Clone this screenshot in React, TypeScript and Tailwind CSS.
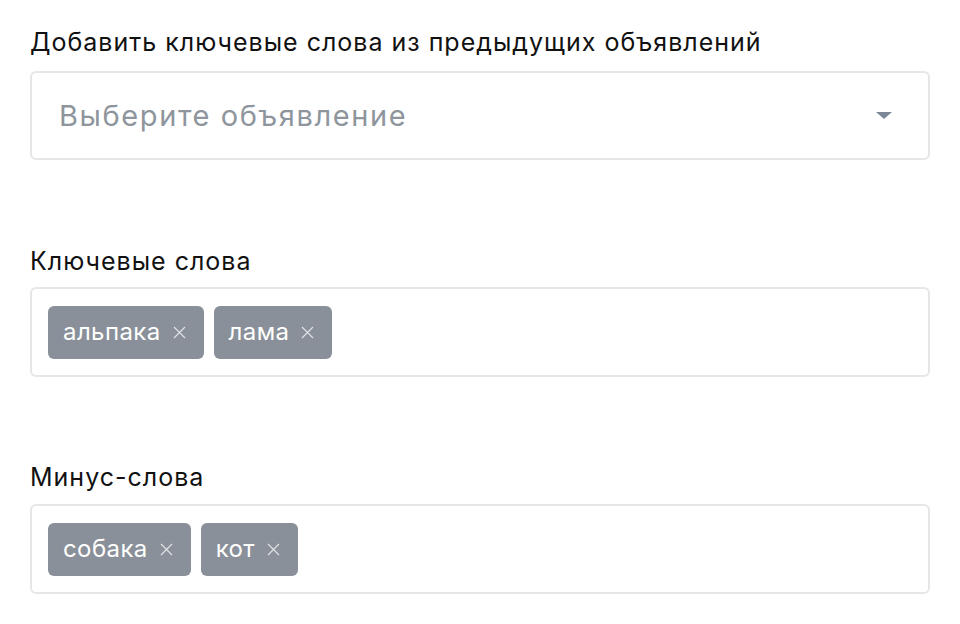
import React from "react";

function Chip({ label }: { label: string }) {
  return (
    <div className="flex h-[53px] items-center rounded-[6px] bg-[#8a9099] pl-[15px] pr-[18px] text-[24px] tracking-[0.4px] text-white">
      <span>{label}</span>
      <svg className="ml-[12px]" width="13" height="13" viewBox="0 0 13 13" fill="none">
        <path d="M1 1L12 12M12 1L1 12" stroke="#e2e4e7" strokeWidth="1.1" />
      </svg>
    </div>
  );
}

function TagBox({ tags }: { tags: string[] }) {
  return (
    <div className="flex h-[90px] items-center gap-[10px] rounded-[6px] border-2 border-[#e6e6e6] bg-white px-[16px]">
      {tags.map((t) => (
        <Chip key={t} label={t} />
      ))}
    </div>
  );
}

export default function App() {
  return (
    <div
      className="min-h-[624px] w-[960px] bg-white px-[30px] pt-[26px] text-[#111]"
      style={{ fontFamily: "Inter, 'Noto Sans', sans-serif" }}
    >
      <div className="text-[25px] leading-[32px] tracking-[1px]">Добавить ключевые слова из предыдущих объявлений</div>
      <div className="mt-[13px] flex h-[89px] items-center justify-between rounded-[6px] border-2 border-[#e6e6e6] bg-white pl-[27px] pr-[36px]">
        <span className="text-[29px] tracking-[1.6px] text-[#8e959c]">Выберите объявление</span>
        <svg width="16" height="7" viewBox="0 0 16 7">
          <path d="M0 0H16L8 7Z" fill="#7b8797" />
        </svg>
      </div>

      <div className="mt-[85px] text-[25px] leading-[32px] tracking-[1px]">Ключевые слова</div>
      <div className="mt-[10px]">
        <TagBox tags={["альпака", "лама"]} />
      </div>

      <div className="mt-[84px] text-[25px] leading-[32px] tracking-[1px]">Минус-слова</div>
      <div className="mt-[11px]">
        <TagBox tags={["собака", "кот"]} />
      </div>
    </div>
  );
}
